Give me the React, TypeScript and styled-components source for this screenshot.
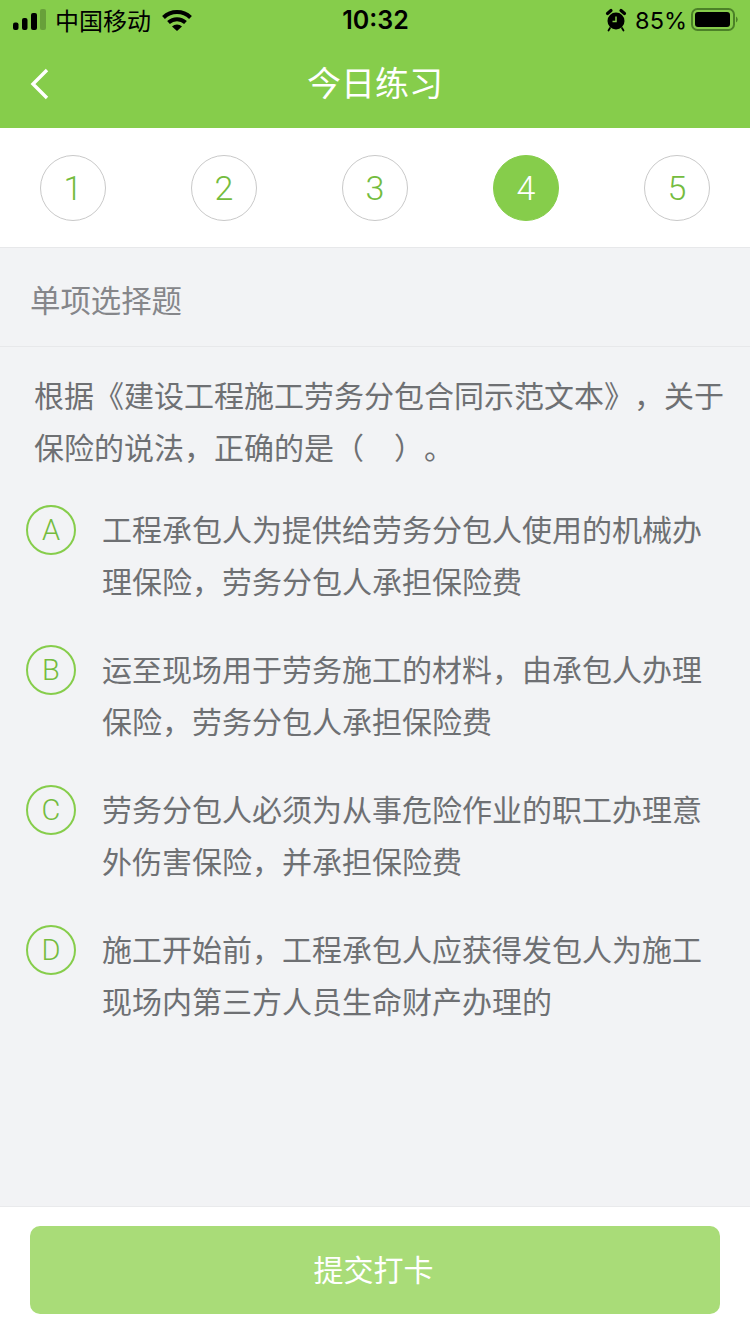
import styled, {createGlobalStyle} from 'styled-components';

const GREEN = '#86cd4b';
const NUMBER_GREEN = '#74bc3e';
const CJK = '"Noto Sans CJK SC", "Liberation Sans", sans-serif';

const STEPS = [1, 2, 3, 4, 5];
const CURRENT_STEP = 4;

const OPTIONS = [
   {key: 'A', lines: ['工程承包人为提供给劳务分包人使用的机械办', '理保险，劳务分包人承担保险费']},
   {key: 'B', lines: ['运至现场用于劳务施工的材料，由承包人办理', '保险，劳务分包人承担保险费']},
   {key: 'C', lines: ['劳务分包人必须为从事危险作业的职工办理意', '外伤害保险，并承担保险费']},
   {key: 'D', lines: ['施工开始前，工程承包人应获得发包人为施工', '现场内第三方人员生命财产办理的']},
];

const GlobalStyle = createGlobalStyle`
   html, body {
      margin: 0;
      padding: 0;
      background: #f2f3f5;
   }
   * {
      box-sizing: border-box;
   }
`;

const Page = styled.div`
   width: 750px;
   height: 1334px;
   display: flex;
   flex-direction: column;
   overflow: hidden;
   background: #f2f3f5;
   font-family: ${CJK};
   text-spacing-trim: space-all;
`;

const Header = styled.header`
   height: 128px;
   background: ${GREEN};
   display: flex;
   flex-direction: column;
`;

const StatusBar = styled.div`
   height: 40px;
   padding: 0 12px 0 13px;
   display: grid;
   grid-template-columns: 1fr auto 1fr;
   align-items: center;
   color: #000;
`;

const StatusLeft = styled.div`
   display: flex;
   align-items: center;
`;

const StatusRight = styled.div`
   display: flex;
   align-items: center;
   justify-content: flex-end;
`;

const Carrier = styled.span`
   font-size: 24px;
   line-height: 40px;
   margin: 0 11px 0 8px;
`;

const Clock = styled.span`
   font-family: Inter, "Liberation Sans", sans-serif;
   font-size: 25px;
   font-weight: 600;
`;

const Percent = styled.span`
   font-family: Inter, "Liberation Sans", sans-serif;
   font-size: 23.5px;
   margin: 0 4px 0 8px;
`;

const NavBar = styled.nav`
   flex: 1;
   padding: 0 30px;
   display: grid;
   grid-template-columns: 1fr auto 1fr;
   align-items: center;
`;

const NavTitle = styled.h1`
   margin: 0;
   padding-bottom: 4px;
   font-size: 34px;
   font-weight: 400;
   line-height: 84px;
   color: #fff;
`;

const Stepper = styled.div`
   height: 120px;
   padding: 0 40px;
   display: flex;
   align-items: center;
   justify-content: space-between;
   background: #fff;
   border-bottom: 1px solid #e7e8ea;
`;

const Step = styled.div<{$active: boolean}>`
   width: 66px;
   height: 66px;
   display: flex;
   align-items: center;
   justify-content: center;
   border-radius: 50%;
   border: 1px solid ${props => (props.$active ? GREEN : '#c9c9c9')};
   background: ${props => (props.$active ? GREEN : '#fff')};
   color: ${props => (props.$active ? '#fff' : NUMBER_GREEN)};
   font-family: Roboto, "Liberation Sans", sans-serif;
   font-size: 34px;
   font-weight: 300;
`;

const QuestionType = styled.div`
   height: 99px;
   padding: 3px 0 0 30px;
   display: flex;
   align-items: center;
   border-bottom: 1px solid #e7e8ea;
   font-size: 30.4px;
   font-weight: 400;
   color: #85868a;
`;

const Body = styled.main`
   flex: 1;
   padding: 21px 30px 0 26px;
`;

const Question = styled.p`
   margin: 0 0 30px 8px;
   font-size: 30px;
   font-weight: 400;
   line-height: 52px;
   color: #6e7073;
   white-space: nowrap;
`;

const OptionList = styled.div`
   display: flex;
   flex-direction: column;
   gap: 36px;
`;

const Option = styled.div`
   display: flex;
   align-items: flex-start;
   gap: 26px;
`;

const OptionBadge = styled.span`
   flex: none;
   width: 50px;
   height: 50px;
   margin-top: 3px;
   display: flex;
   align-items: center;
   justify-content: center;
   border-radius: 50%;
   border: 2px solid ${GREEN};
   color: ${NUMBER_GREEN};
   font-family: Roboto, "Liberation Sans", sans-serif;
   font-size: 29px;
   font-weight: 300;
`;

const OptionText = styled.div`
   font-size: 30px;
   font-weight: 400;
   line-height: 52px;
   color: #6e7073;
   white-space: nowrap;
`;

const Footer = styled.footer`
   height: 128px;
   padding: 19px 30px 20px;
   background: #fff;
   border-top: 1px solid #e9eaec;
`;

const SubmitButton = styled.button`
   width: 100%;
   height: 88px;
   padding: 0 3px 4px 0;
   border: 0;
   border-radius: 10px;
   background: #a9dc78;
   color: #fff;
   font-family: ${CJK};
   font-size: 30px;
   font-weight: 400;
`;

const SignalIcon = () => (
   <svg width='34' height='22' viewBox='0 0 34 22'>
      <rect x='0' y='13.5' width='5.5' height='7.5' rx='2' fill='#000' />
      <rect x='9' y='9' width='5.5' height='12' rx='2' fill='#000' />
      <rect x='18' y='4' width='6' height='17' rx='2' fill='#000' />
      <rect x='27' y='0' width='6' height='21' rx='2' fill='#000' opacity='0.22' />
   </svg>
);

const WifiIcon = () => (
   <svg width='30' height='22' viewBox='0 0 30 22'>
      <path d='M1.5 8.5a19.5 19.5 0 0 1 27 0' fill='none' stroke='#000' strokeWidth='4' />
      <path d='M6.5 13.5a12.5 12.5 0 0 1 17 0' fill='none' stroke='#000' strokeWidth='4' />
      <path d='M10 17.5a7.5 7.5 0 0 1 10 0l-5 4.5z' fill='#000' />
   </svg>
);

const AlarmIcon = () => (
   <svg width='22' height='24' viewBox='0 0 22 24'>
      <circle cx='11' cy='13' r='8.5' fill='#000' />
      <path d='M2.5 5.5 6 2.5M19.5 5.5 16 2.5' stroke='#000' strokeWidth='3.2' strokeLinecap='round' />
      <path d='M5 20 3.5 22.5M17 20 18.5 22.5' stroke='#000' strokeWidth='1.8' strokeLinecap='round' />
      <path d='M11 8.5v5H7.5' fill='none' stroke='#86cd4b' strokeWidth='1.5' />
   </svg>
);

const BatteryIcon = () => (
   <svg width='47' height='24' viewBox='0 0 47 24'>
      <rect x='1' y='1' width='42' height='21' rx='5.5' fill='none' stroke='#3d6e1f' strokeOpacity='0.8' strokeWidth='2' />
      <rect x='4' y='4' width='35' height='15' rx='3' fill='#000' />
      <path d='M45 8.5a3.5 3.5 0 0 1 0 6z' fill='#3d6e1f' fillOpacity='0.8' />
   </svg>
);

const BackIcon = () => (
   <svg width='20' height='32' viewBox='0 0 20 32'>
      <path d='M17 2 3 16l14 14' fill='none' stroke='#fff' strokeWidth='3.4' />
   </svg>
);

const App = () => {
   return (
      <Page>
         <GlobalStyle />
         <Header>
            <StatusBar>
               <StatusLeft>
                  <SignalIcon />
                  <Carrier>中国移动</Carrier>
                  <WifiIcon />
               </StatusLeft>
               <Clock>10:32</Clock>
               <StatusRight>
                  <AlarmIcon />
                  <Percent>85%</Percent>
                  <BatteryIcon />
               </StatusRight>
            </StatusBar>
            <NavBar>
               <BackIcon />
               <NavTitle>今日练习</NavTitle>
            </NavBar>
         </Header>
         <Stepper>
            {STEPS.map(step => (
               <Step key={step} $active={step === CURRENT_STEP}>
                  {step}
               </Step>
            ))}
         </Stepper>
         <QuestionType>单项选择题</QuestionType>
         <Body>
            <Question>
               根据《建设工程施工劳务分包合同示范文本》，关于
               <br />
               保险的说法，正确的是（　）。
            </Question>
            <OptionList>
               {OPTIONS.map(option => (
                  <Option key={option.key}>
                     <OptionBadge>{option.key}</OptionBadge>
                     <OptionText>
                        {option.lines.map(line => (
                           <div key={line}>{line}</div>
                        ))}
                     </OptionText>
                  </Option>
               ))}
            </OptionList>
         </Body>
         <Footer>
            <SubmitButton type='button'>提交打卡</SubmitButton>
         </Footer>
      </Page>
   );
};

export default App;
